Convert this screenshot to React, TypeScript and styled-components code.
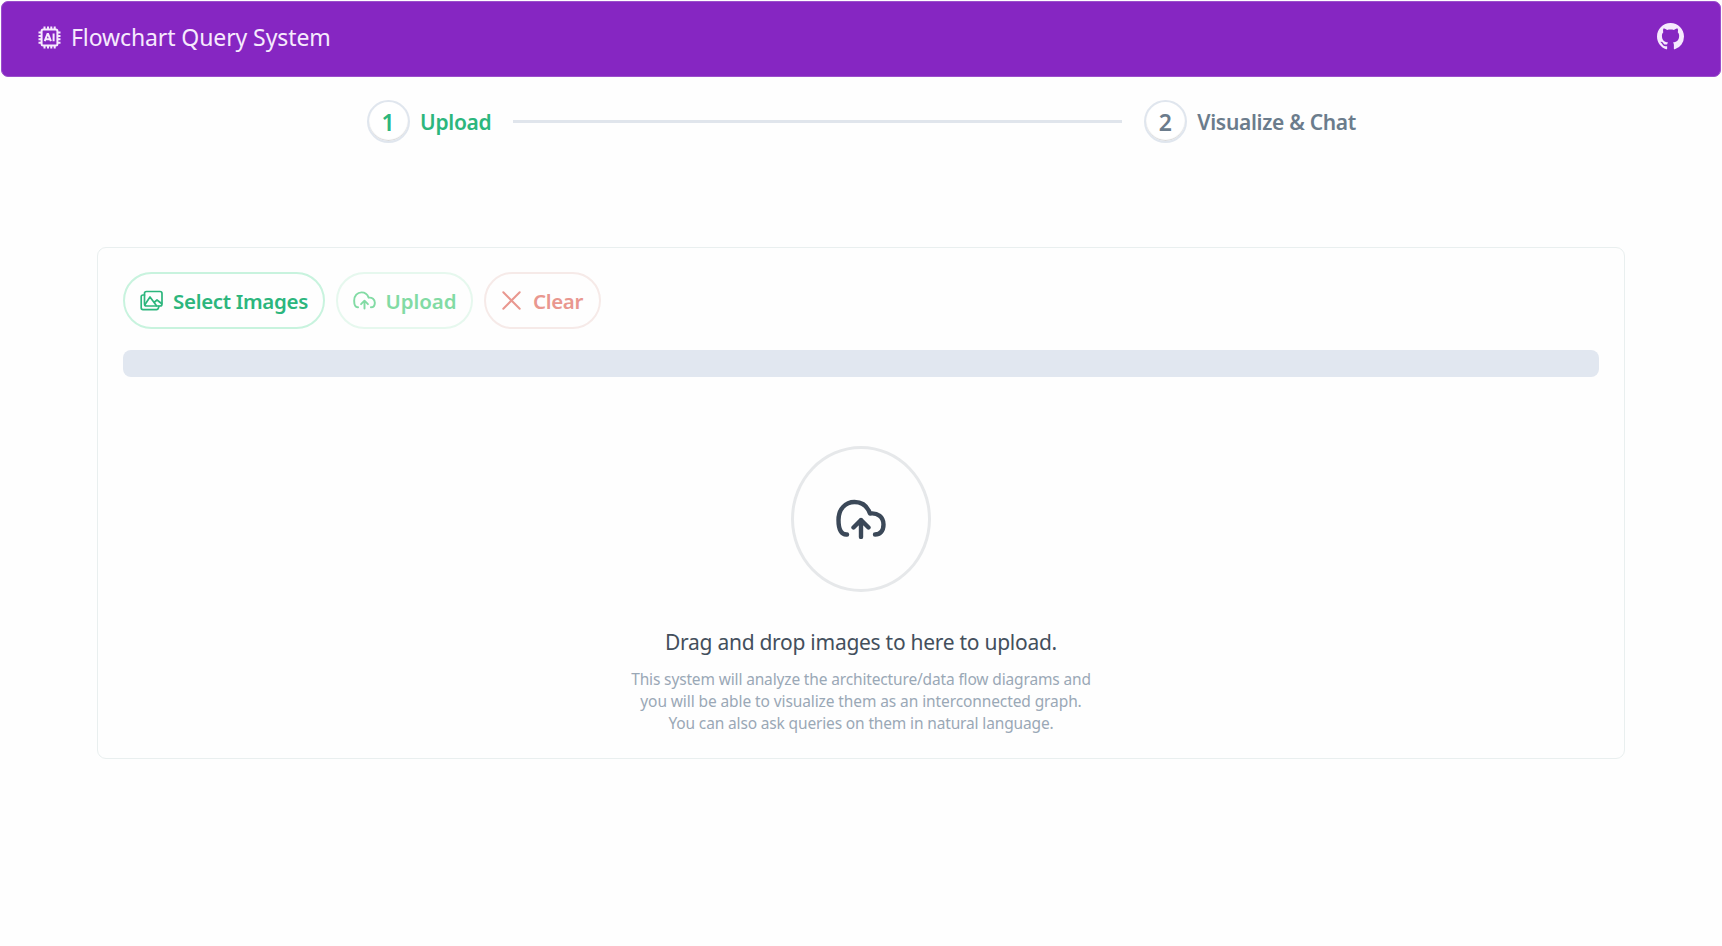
import React from "react";
import styled, { createGlobalStyle } from "styled-components";
import { BsGithub } from "react-icons/bs";

const GlobalStyle = createGlobalStyle`
  * { box-sizing: border-box; }
  body {
    margin: 0;
    background: #fefefe;
    font-family: "Noto Sans", "Open Sans", sans-serif;
    color: #434f5c;
  }
`;

const Page = styled.div`
  height: 946px;
  padding: 1px;
  overflow: hidden;
`;

const Header = styled.header`
  display: flex;
  align-items: center;
  justify-content: space-between;
  height: 76px;
  padding: 0 36px 2px;
  border: 1px solid #9a4fcb;
  border-radius: 7px;
  background: #8626c2;
  color: #f6eafd;
`;

const Brand = styled.div`
  display: flex;
  align-items: center;
  gap: 10px;
`;

const GithubLink = styled.a`
  display: flex;
  padding-bottom: 3px;
  color: inherit;
`;

const Label = styled.span<{ $size: number; $spacing?: number; $weight?: number }>`
  font-size: ${(p) => p.$size}px;
  font-weight: ${(p) => p.$weight ?? 400};
  letter-spacing: ${(p) => p.$spacing ?? 0}px;
  line-height: 1.35;
  white-space: nowrap;
`;

const Steps = styled.nav`
  display: flex;
  align-items: center;
  height: 43px;
  margin: 23px 365px 0 366px;
`;

const Step = styled.div<{ $active?: boolean }>`
  display: flex;
  align-items: center;
  gap: 10px;
  color: ${(p) => (p.$active ? "#2cb67d" : "#6b7c8c")};

  ${Label} {
    padding-top: 2px;
  }
`;

const StepNumber = styled.span`
  display: grid;
  place-items: center;
  width: 43px;
  height: 43px;
  padding: 1px 1px 0 0;
  border: 2px solid #e0e6ee;
  border-radius: 50%;
  background: #fff;
  box-shadow: inset 0 -1px 1px rgba(0, 0, 0, 0.16);
  font-size: 23px;
  font-weight: 600;
  line-height: 1;
`;

const Separator = styled.div`
  flex: 1;
  height: 3px;
  margin: 0 22px;
  background: #e0e5ec;
`;

const Card = styled.main`
  height: 512px;
  margin: 104px 96px 0;
  padding: 24px 25px;
  border: 1px solid #e9efef;
  border-radius: 9px;
`;

const Toolbar = styled.div`
  display: flex;
  gap: 11px;
`;

const tones = {
  primary: { color: "#2cb67d", border: "#c8f3de" },
  success: { color: "#82dba4", border: "#e6f8ee" },
  danger: { color: "#e9978f", border: "#f6eae8" },
};

const Button = styled.button<{ $tone: keyof typeof tones; $width: number; $gap: number }>`
  display: flex;
  align-items: center;
  justify-content: center;
  gap: ${(p) => p.$gap}px;
  width: ${(p) => p.$width}px;
  height: 57px;
  padding: 0;
  border: 2px solid ${(p) => tones[p.$tone].border};
  border-radius: 29px;
  background: transparent;
  color: ${(p) => tones[p.$tone].color};
  font-family: inherit;

  ${Label} {
    padding-top: 3px;
  }
`;

const Progress = styled.div`
  height: 27px;
  margin-top: 21px;
  border-radius: 8px;
  background: #e1e7f0;
`;

const DropZone = styled.section`
  display: flex;
  flex-direction: column;
  align-items: center;
  padding-top: 69px;
`;

const UploadRing = styled.div`
  display: grid;
  place-items: center;
  width: 140px;
  height: 146px;
  margin-bottom: 36px;
  border: 3px solid #e6e8ea;
  border-radius: 50%;
  color: #3b4858;
`;

const Hint = styled.p`
  margin: 13px 0 0;
  color: #9aa8b6;
  font-size: 15.5px;
  line-height: 21.8px;
  text-align: center;
`;

const HintLine = styled.span<{ $spacing: number }>`
  display: block;
  letter-spacing: ${(p) => p.$spacing}px;
`;

const ChipIcon = () => (
  <svg width="23" height="23" viewBox="0 0 23 23" fill="none" stroke="currentColor">
    <rect x="3.6" y="3.6" width="15.8" height="15.8" rx="1.5" strokeWidth="2" />
    <path d="M6.5 0.5v3M10 0.5v3M13.3 0.5v3M16.7 0.5v3M6.5 19.5v3M10 19.5v3M13.3 19.5v3M16.7 19.5v3M0.5 6.5h3M0.5 10h3M0.5 13.3h3M0.5 16.7h3M19.5 6.5h3M19.5 10h3M19.5 13.3h3M19.5 16.7h3" strokeWidth="2" />
    <path d="M6.7 15.2 9.5 8h.6l2.8 7.2M7.8 13.2h4M15.6 7.5v7.7" strokeWidth="2" />
  </svg>
);

const ImagesIcon = () => (
  <svg width="23" height="22" viewBox="0 0 23 22" fill="none" stroke="currentColor" strokeWidth="1.7" strokeLinejoin="round" strokeLinecap="round">
    <rect x="4.5" y="1.5" width="17.5" height="14.5" rx="2" />
    <path d="M4.5 5H3a1.8 1.8 0 0 0-1.8 1.8v10.9A2 2 0 0 0 3 19.7h13.5a2 2 0 0 0 1.8-1.5l.7-2M5 14.5l5-7.5 6.5 8.7M14 12.5l3-2.5 4.5 3.5" />
  </svg>
);

const CloudUploadIcon = ({ width, height, stroke }: { width: number; height: number; stroke: number }) => (
  <svg width={width} height={height} viewBox="0 0 50 40" fill="none" stroke="currentColor" strokeWidth={stroke} strokeLinecap="round" strokeLinejoin="round">
    <path d="M11 35.5C5.5 36 2.5 31 2.5 21 2.5 10 9.5 3 18.5 3c7.5 0 13 4.500 15.500 11.500 7.500-1 13.500 3.500 13.500 11 0 6.500-3.500 10-8.500 10" />
    <path d="M25 38V21M17.5 28.5 25 21l7.5 7.5" />
  </svg>
);

const CrossIcon = () => (
  <svg width="19" height="19" viewBox="0 0 19 19" fill="none" stroke="currentColor" strokeWidth="2" strokeLinecap="round">
    <path d="m1.3 1.3 16.4 16.4M17.7 1.3 1.3 17.7" />
  </svg>
);

export default function App() {
  return (
    <>
      <GlobalStyle />
      <Page>
        <Header>
          <Brand>
            <ChipIcon />
            <Label $size={23} $spacing={-0.1}>Flowchart Query System</Label>
          </Brand>
          <GithubLink aria-label="GitHub">
            <BsGithub size={27} />
          </GithubLink>
        </Header>
        <Steps>
          <Step $active>
            <StepNumber>1</StepNumber>
            <Label $size={21} $weight={600} $spacing={-0.3}>Upload</Label>
          </Step>
          <Separator />
          <Step>
            <StepNumber>2</StepNumber>
            <Label $size={21} $weight={600} $spacing={-0.31}>Visualize &amp; Chat</Label>
          </Step>
        </Steps>
        <Card>
          <Toolbar>
            <Button $tone="primary" $width={202} $gap={10}>
              <ImagesIcon />
              <Label $size={20.5} $weight={600} $spacing={-0.33}>Select Images</Label>
            </Button>
            <Button $tone="success" $width={137} $gap={10}>
              <CloudUploadIcon width={23} height={18.4} stroke={4.2} />
              <Label $size={20.5} $weight={600} $spacing={-0.1}>Upload</Label>
            </Button>
            <Button $tone="danger" $width={117} $gap={12}>
              <CrossIcon />
              <Label $size={20.5} $weight={600} $spacing={-0.35}>Clear</Label>
            </Button>
          </Toolbar>
          <Progress />
          <DropZone>
            <UploadRing>
              <CloudUploadIcon width={50} height={40} stroke={4.4} />
            </UploadRing>
            <Label $size={21} $spacing={-0.27}>Drag and drop images to here to upload.</Label>
            <Hint>
              <HintLine $spacing={-0.15}>This system will analyze the architecture/data flow diagrams and</HintLine>
              <HintLine $spacing={-0.1}>you will be able to visualize them as an interconnected graph.</HintLine>
              <HintLine $spacing={-0.15}>You can also ask queries on them in natural language.</HintLine>
            </Hint>
          </DropZone>
        </Card>
      </Page>
    </>
  );
}
